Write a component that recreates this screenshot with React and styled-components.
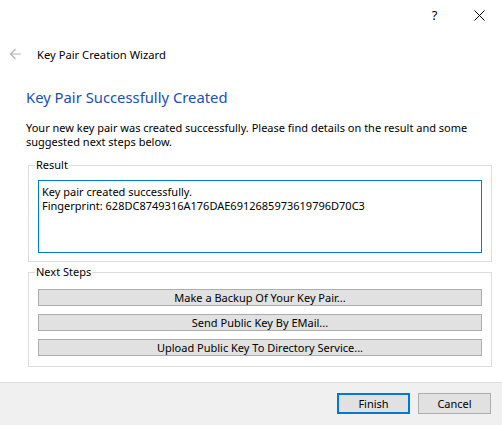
import styled, { createGlobalStyle } from 'styled-components';

const Global = createGlobalStyle`
	html, body {
		margin: 0;
		padding: 0;
		background: #ffffff;
	}
	body {
		font-family: "Noto Sans", "Liberation Sans", sans-serif;
		font-size: 11px;
		color: #000000;
	}
`

const Window = styled.div`
	width: 502px;
	height: 425px;
	display: flex;
	flex-direction: column;
	background: #ffffff;
	overflow: hidden;
`

const TitleBar = styled.div`
	height: 30px;
	display: flex;
	justify-content: flex-end;
	align-items: center;
`

const CaptionButton = styled.div`
	width: 45px;
	height: 30px;
	display: flex;
	align-items: center;
	justify-content: center;
	font-size: 13px;
	color: #000;
`

const Header = styled.div`
	height: 48px;
	display: flex;
	align-items: center;
	padding-left: 9px;
	gap: 15px;
`

const HeaderTitle = styled.div`
	font-size: 11.2px;
`

const Content = styled.div`
	flex: 1;
	padding: 9px 10px 0 26px;
	display: flex;
	flex-direction: column;
`

const Heading = styled.h1`
	margin: 0;
	font-weight: normal;
	font-size: 14.8px;
	color: #1c4fb0;
	line-height: 20px;
`

const Intro = styled.p`
	margin: 14px 0 0;
	line-height: 14px;
`

const Group = styled.fieldset`
	margin: ${p => p.$top}px 0 0 2px;
	padding: 0 9px ${p => p.$bottom}px 9px;
	border: 1px solid #dcdcdc;
	min-width: 0;
`

const Legend = styled.legend`
	padding: 0 1px;
	margin-left: -3px;
	line-height: 14px;
`

const Output = styled.div`
	height: 63px;
	margin-top: 8px;
	border: 1px solid #0078d7;
	padding: 4px 3px;
	line-height: 14px;
`

const StepList = styled.div`
	margin-top: 10px;
	display: flex;
	flex-direction: column;
	gap: 8px;
`

const StepButton = styled.button`
	height: 17px;
	padding: 0;
	border: 1px solid #adadad;
	background: #e1e1e1;
	font-family: inherit;
	font-size: 11px;
	line-height: 14px;
	color: #000;
`

const Footer = styled.div`
	height: 43px;
	box-sizing: border-box;
	border-top: 1px solid #dfdfdf;
	background: #f0f0f0;
	display: flex;
	justify-content: flex-end;
	align-items: flex-start;
	padding: 10px 11px 0 0;
	gap: 8px;
`

const DialogButton = styled.button`
	width: 73px;
	height: 21px;
	padding: 0;
	box-sizing: border-box;
	border: ${p => p.$default ? '2px solid #0078d7' : '1px solid #adadad'};
	background: #e1e1e1;
	font-family: inherit;
	font-size: 11px;
	color: #000;
`

function BackArrow() {
	return (
		<svg width="13" height="12" viewBox="0 0 13 12" fill="none" stroke="#b4b4b4" strokeWidth="1.2">
			<path d="M12 6H1.5M6.5 1L1.5 6l5 5" />
		</svg>
	)
}

function CloseGlyph() {
	return (
		<svg width="11" height="11" viewBox="0 0 11 11" stroke="#000" strokeWidth="1">
			<path d="M0.5 0.5l10 10M10.5 0.5l-10 10" />
		</svg>
	)
}

export default function App() {
	const steps = [
		'Make a Backup Of Your Key Pair...',
		'Send Public Key By EMail...',
		'Upload Public Key To Directory Service...',
	];

	return (
		<Window>
			<Global />
			<TitleBar>
				<CaptionButton>?</CaptionButton>
				<CaptionButton><CloseGlyph /></CaptionButton>
			</TitleBar>
			<Header>
				<BackArrow />
				<HeaderTitle>Key Pair Creation Wizard</HeaderTitle>
			</Header>
			<Content>
				<Heading>Key Pair Successfully Created</Heading>
				<Intro>
					Your new key pair was created successfully. Please find details on the result and some<br />
					suggested next steps below.
				</Intro>
				<Group $top={9} $bottom={8}>
					<Legend>Result</Legend>
					<Output>
						Key pair created successfully.<br />
						Fingerprint: 628DC8749316A176DAE6912685973619796D70C3
					</Output>
				</Group>
				<Group $top={3} $bottom={10}>
					<Legend>Next Steps</Legend>
					<StepList>
						{steps.map(s => <StepButton key={s}>{s}</StepButton>)}
					</StepList>
				</Group>
			</Content>
			<Footer>
				<DialogButton $default>Finish</DialogButton>
				<DialogButton>Cancel</DialogButton>
			</Footer>
		</Window>
	)
}
